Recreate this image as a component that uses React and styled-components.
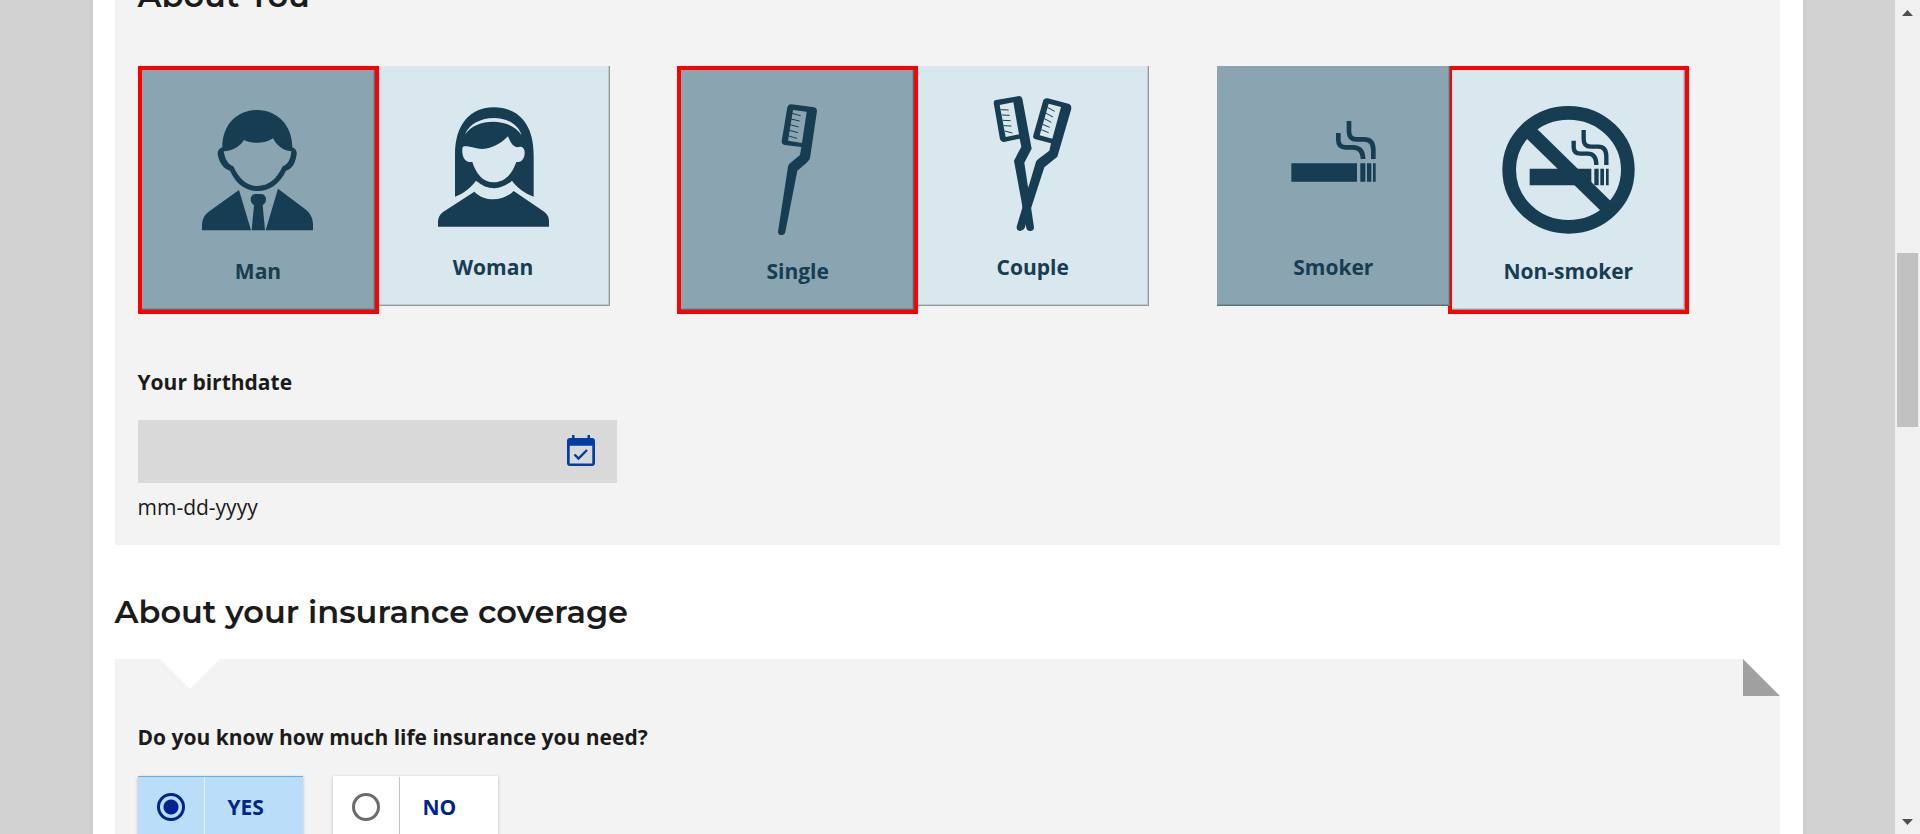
import React, { useState } from "react";
import styled, { createGlobalStyle } from "styled-components";

const GlobalStyle = createGlobalStyle`
  * { box-sizing: border-box; }
  body {
    margin: 0;
    background: #d2d2d2;
    color: #1b1b1b;
    font-family: "Open Sans", "Noto Sans", sans-serif;
    font-size: 21px;
    line-height: 30px;
  }
`;

const Window = styled.div`
  display: grid;
  grid-template-columns: minmax(0, 1fr) 25px;
  height: 100vh;
  overflow: hidden;
`;

const Viewport = styled.div`
  overflow: hidden;
`;

const Page = styled.main`
  max-width: 1710px;
  min-height: 100%;
  margin: 0 auto;
  padding: 0 23px 0 22px;
  background: #fff;
  box-shadow: 0 0 5px rgba(0, 0, 0, 0.06);
`;

const Heading = styled.h2`
  margin: 0;
  font-family: Montserrat, "Open Sans", sans-serif;
  font-size: 32px;
  font-weight: 600;
  line-height: 40px;
`;

const SectionHeading = styled(Heading)`
  padding: 47px 0 27px;
`;

const Panel = styled.section`
  padding: 23px;
  background: #f3f3f3;
`;

const AboutPanel = styled(Panel)`
  margin-top: -47px;
`;

const CoveragePanel = styled(Panel)`
  position: relative;
  padding-top: 63px;

  &::before {
    content: "";
    position: absolute;
    top: 0;
    left: 45px;
    border: 30px solid transparent;
    border-top-color: #fff;
    border-bottom: 0;
  }
`;

const Fold = styled.svg`
  position: absolute;
  top: 0;
  right: 0;
  width: 37px;
  height: 37px;
  background: #fff;
  fill: #a0a0a0;
`;

const TileGroups = styled.div`
  display: grid;
  grid-template-columns: repeat(3, 1fr);
  margin-top: 50px;
`;

const TileGroup = styled.div`
  display: flex;
  align-items: flex-start;
  height: 248px;
`;

const Tile = styled.button`
  position: relative;
  z-index: ${(p) => (p.$first ? 1 : 0)};
  margin: 0 -2px 0 0;
  padding: 0;
  border: ${(p) => (p.$outlined ? "4px solid #f00" : "0")};
  background: none;
  color: #163d51;
  font: inherit;
  font-weight: 700;
  cursor: pointer;
`;

const TileFace = styled.span`
  display: flex;
  flex-direction: column;
  align-items: center;
  width: 233px;
  height: 240px;
  background: ${(p) => (p.$dark ? "#8aa4b1" : "#d9e7ee")};
  box-shadow: inset -1px -1px 0 rgba(0, 0, 0, 0.24), inset -2px -2px 0 rgba(0, 0, 0, 0.12);
`;

const TileLabel = styled.span`
  line-height: 42px;
`;

const TileArt = styled.svg`
  display: block;
  width: 233px;
  height: 180px;
  fill: #163d51;
`;

const FieldLabel = styled.label`
  display: block;
  margin: 53px 0 23px;
  font-weight: 700;
`;

const DateField = styled.div`
  display: flex;
  align-items: center;
  max-width: 479px;
  height: 63px;
  background: #d9d9d9;
`;

const DateInput = styled.input`
  flex: 1;
  min-width: 0;
  height: 100%;
  padding: 0 16px;
  border: 0;
  background: transparent;
  font: inherit;
`;

const CalendarButton = styled.button`
  display: flex;
  padding: 0 22px 2px;
  border: 0;
  background: none;
  cursor: pointer;
`;

const Hint = styled.p`
  margin: 9px 0 0;
`;

const Fieldset = styled.fieldset`
  min-width: 0;
  margin: 0;
  padding: 0;
  border: 0;
`;

const Legend = styled.legend`
  padding: 0;
  font-weight: 700;
`;

const Choices = styled.div`
  display: flex;
  gap: 30px;
  margin-top: 24px;
`;

const Choice = styled.label`
  display: flex;
  width: 165px;
  height: 60px;
  border-top: 1px solid ${(p) => (p.$on ? "#62b1ee" : "#fff")};
  background: ${(p) => (p.$on ? "#badefa" : "#fff")};
  box-shadow: 0 1px 3px rgba(0, 0, 0, 0.25);
  color: #00248f;
  font-weight: 700;
  cursor: pointer;
`;

const RadioCell = styled.span`
  display: flex;
  align-items: center;
  justify-content: center;
  width: 67px;
  border-right: 1px solid ${(p) => (p.$on ? "#e6f4fe" : "#c4c4c4")};
`;

const Radio = styled.input`
  appearance: none;
  width: 28px;
  height: 28px;
  margin: 0;
  border: 3px solid #6b6b6b;
  border-radius: 50%;
  background: #fff;

  &:checked {
    border-color: #00248f;
    background: radial-gradient(circle, #00248f 7px, transparent 8px);
  }
`;

const ChoiceText = styled.span`
  align-self: center;
  padding-left: 23px;
`;

const Scrollbar = styled.aside`
  display: grid;
  grid-template-rows: 25px 228fr 174fr 382fr 25px;
  background: #f0f0f0;
`;

const ScrollButton = styled.button`
  display: flex;
  align-items: center;
  justify-content: center;
  padding: 0;
  border: 0;
  background: none;
`;

const ScrollThumb = styled.div`
  grid-row: 3;
  margin: 0 2px;
  background: #c1c1c1;
`;

const ScrollEnd = styled(ScrollButton)`
  grid-row: 5;
`;

const third = (x, y) => `translate(${x} ${y}) scale(${1 / 3})`;

const ManArt = () => (
  <TileArt viewBox="0 0 233 180" aria-hidden="true">
    <g transform={third(38, 20)}>
      <path
        fillRule="evenodd"
        d="M127 172C127 100 175 60 232 60C290 60 337 105 337 172C346 176 351 182 350 192C347 217 338 236 318 242C300 280 270 303 232 303C195 303 167 280 150 242C130 237 116 215 113 192C112 182 118 176 127 172ZM131 184C135 208 144 224 160 229C178 268 200 288 232 288C265 288 290 268 308 229C324 224 332 208 334 184C308 182 290 166 279 145C255 162 215 162 192 150C180 170 158 182 131 184Z"
      />
      <path d="M66 421V405C67 388 72 376 88 364L177 300L213 421ZM257 421L294 296L375 357C393 370 399 388 399 405V421ZM226 312H244C262 314 262 338 248 346L255 421H215L222 346C208 338 208 314 226 312Z" />
    </g>
  </TileArt>
);

const WomanArt = () => (
  <TileArt viewBox="0 0 233 180" aria-hidden="true">
    <g transform={third(44, 24)}>
      <path
        fillRule="evenodd"
        d="M102 320V195C102 100 150 52 218 52C290 52 338 100 338 195V320C310 310 285 290 273 272C240 302 200 302 165 272C152 290 130 310 102 320ZM132 134C165 82 270 82 302 136C280 65 155 70 132 134ZM126 170C123 174 124 180 124 188C126 210 140 218 154 216C165 250 185 277 218 277C250 277 272 255 286 216C302 217 311 206 311 188C311 172 300 167 289 172C275 170 267 155 261 139C240 160 214 176 185 177C160 177 142 165 126 170Z"
      />
      <path d="M51 410V395C52 380 58 370 72 362L160 305C190 336 245 336 278 303L365 362C380 372 384 380 384 395V410Z" />
    </g>
  </TileArt>
);

const SingleArt = () => (
  <TileArt viewBox="0 0 233 180" aria-hidden="true">
    <g transform={third(-21, -20)}>
      <path
        fillRule="evenodd"
        d="M382 172Q384 163 394 163L463 172Q471 174 471 182L450 325Q448 332 440 338L412 362L376 546Q374 555 365 555Q354 555 354 545L384 350Q385 344 390 340L420 315L424 291L374 285Q364 283 365 274ZM399 180L384 272L426 279L440 185Z"
      />
      <path
        fill="none"
        stroke="#163d51"
        strokeWidth="3"
        d="M396 190L422 197M393 207L419 213M390 224L416 231M388 241L414 248M386 258L411 265"
      />
    </g>
  </TileArt>
);

const CoupleArt = () => (
  <TileArt viewBox="0 0 233 180" aria-hidden="true">
    <g transform={third(-256, -16)}>
      <path
        fillRule="evenodd"
        d="M1001 158Q1001 151 1008 150L1078 138Q1085 138 1087 146L1115 296L1093 338L1122 532Q1122 543 1111 543Q1101 543 1099 534L1062 332L1084 290L1079 266L1032 276Q1023 277 1020 268ZM1019 165L1037 261L1077 253L1060 157Z"
      />
      <path
        fillRule="evenodd"
        d="M1150 150Q1155 143 1163 145L1228 162Q1235 166 1234 176L1192 320L1153 352L1094 534Q1089 543 1080 543Q1069 541 1070 530L1128 335Q1130 330 1136 326L1168 302L1173 280L1127 268Q1117 265 1120 256ZM1166 161L1139 256L1177 266L1203 171Z"
      />
      <path d="M1086 460L1104 405L1114 465L1103 500L1096 500Z" />
      <path
        fill="none"
        stroke="#163d51"
        strokeWidth="3"
        d="M1022 179L1046 180M1025 195L1049 196M1028 211L1052 212M1031 227L1054 228M1034 243L1057 249M1162 172L1184 184M1157 189L1179 201M1153 206L1174 217M1148 223L1169 232M1144 239L1166 248"
      />
    </g>
  </TileArt>
);

const SmokerArt = () => (
  <TileArt viewBox="0 0 233 180" aria-hidden="true">
    <g transform={third(-17, -16)}>
      <path d="M274 340H471V395H274ZM481 340H496V395H481ZM501 340H514V395H501ZM519 340H527V395H519Z" />
      <path
        fill="none"
        stroke="#163d51"
        strokeWidth="14"
        d="M447 213V245Q447 268 470 268H492Q520 268 520 300V327M415 249V270Q415 292 437 292H458Q489 292 489 327"
      />
    </g>
  </TileArt>
);

const NonSmokerArt = () => (
  <TileArt viewBox="0 0 233 180" aria-hidden="true">
    <g transform={third(-252, -20)}>
      <ellipse cx="1105.5" cy="359.5" rx="178" ry="171" fill="none" stroke="#163d51" strokeWidth="41" />
      <path d="M1000 226L1245 466L1215 495L970 256Z" />
      <path d="M989 356H1174V406H989ZM1183 356H1196V406H1183ZM1201 356H1212V406H1201ZM1218 356H1226V406H1218Z" />
      <path
        fill="none"
        stroke="#163d51"
        strokeWidth="13"
        d="M1151 240V268Q1151 290 1172 290H1195Q1219 290 1219 320V345M1121 272V292Q1121 311 1142 311H1163Q1189 311 1189 345"
      />
    </g>
  </TileArt>
);

const CalendarIcon = () => (
  <svg width="28" height="31" viewBox="0 0 28 31" aria-hidden="true">
    <path
      fill="#003da5"
      fillRule="evenodd"
      d="M5 0H7.5V3H20.5V0H23V3H25Q28 3 28 6V28Q28 31 25 31H3Q0 31 0 28V6Q0 3 3 3H5ZM2.7 10.7V28.5H25.3V10.7Z"
    />
    <path fill="none" stroke="#003da5" strokeWidth="2.4" d="M7.5 19.5L11.5 23.5L20 15" />
  </svg>
);

const GROUPS = [
  [
    { name: "Man", Art: ManArt, dark: true },
    { name: "Woman", Art: WomanArt },
  ],
  [
    { name: "Single", Art: SingleArt, dark: true },
    { name: "Couple", Art: CoupleArt },
  ],
  [
    { name: "Smoker", Art: SmokerArt, dark: true },
    { name: "Non-smoker", Art: NonSmokerArt },
  ],
];

export default function App() {
  const [picked, setPicked] = useState(["Man", "Single", "Non-smoker"]);
  const [knows, setKnows] = useState("YES");

  return (
    <Window>
      <GlobalStyle />
      <Viewport>
        <Page>
          <AboutPanel>
            <Heading>About You</Heading>
            <TileGroups>
              {GROUPS.map((tiles, g) => (
                <TileGroup key={tiles[0].name}>
                  {tiles.map(({ name, Art, dark }, i) => (
                    <Tile
                      key={name}
                      type="button"
                      $first={i === 0}
                      $outlined={picked[g] === name}
                      aria-pressed={picked[g] === name}
                      onClick={() => setPicked(picked.map((v, n) => (n === g ? name : v)))}
                    >
                      <TileFace $dark={dark}>
                        <Art />
                        <TileLabel>{name}</TileLabel>
                      </TileFace>
                    </Tile>
                  ))}
                </TileGroup>
              ))}
            </TileGroups>
            <FieldLabel htmlFor="birthdate">Your birthdate</FieldLabel>
            <DateField>
              <DateInput id="birthdate" type="text" aria-describedby="birthdate-hint" />
              <CalendarButton type="button" aria-label="Choose date">
                <CalendarIcon />
              </CalendarButton>
            </DateField>
            <Hint id="birthdate-hint">mm-dd-yyyy</Hint>
          </AboutPanel>

          <SectionHeading>About your insurance coverage</SectionHeading>
          <CoveragePanel>
            <Fold viewBox="0 0 37 37" aria-hidden="true">
              <path d="M0 0L37 37H0Z" />
            </Fold>
            <Fieldset>
              <Legend>Do you know how much life insurance you need?</Legend>
              <Choices>
                {["YES", "NO"].map((value) => (
                  <Choice key={value} $on={knows === value}>
                    <RadioCell $on={knows === value}>
                      <Radio
                        type="radio"
                        name="knows-amount"
                        checked={knows === value}
                        onChange={() => setKnows(value)}
                      />
                    </RadioCell>
                    <ChoiceText>{value}</ChoiceText>
                  </Choice>
                ))}
              </Choices>
            </Fieldset>
          </CoveragePanel>
        </Page>
      </Viewport>
      <Scrollbar>
        <ScrollButton type="button" aria-label="Scroll up">
          <svg width="11" height="6" viewBox="0 0 11 6">
            <path fill="#505050" d="M0 6L5.5 0L11 6Z" />
          </svg>
        </ScrollButton>
        <ScrollThumb />
        <ScrollEnd type="button" aria-label="Scroll down">
          <svg width="11" height="6" viewBox="0 0 11 6">
            <path fill="#505050" d="M0 0H11L5.5 6Z" />
          </svg>
        </ScrollEnd>
      </Scrollbar>
    </Window>
  );
}
